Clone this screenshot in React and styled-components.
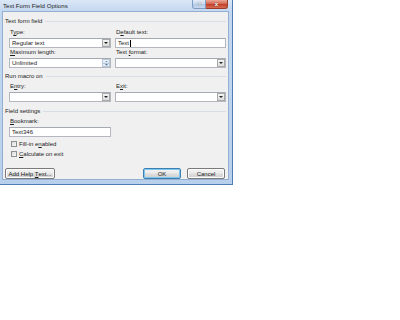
import React from 'react';
import styled, { createGlobalStyle } from 'styled-components';

const GlobalStyle = createGlobalStyle`
  html, body {
    margin: 0;
    padding: 0;
    background: #ffffff;
  }
  body {
    font-family: "Liberation Sans", Arial, sans-serif;
    color: #1b1b1b;
  }
`;

const Window = styled.div`
  width: 233px;
  height: 185px;
  box-sizing: border-box;
  display: flex;
  flex-direction: column;
  background: linear-gradient(#dbe7f6, #c4d8f0 11px, #b9d0ec);
  border-right: 1px solid #4f7db5;
  border-bottom: 1px solid #4f7db5;
`;

const TitleBar = styled.div`
  height: 11px;
  display: flex;
  align-items: flex-start;
  padding-left: 3px;
  padding-right: 4px;
`;

const Title = styled.div`
  flex: 1;
  font-size: 6.1px;
  line-height: 12px;
  color: #1e1e1e;
  white-space: nowrap;
`;

const CaptionButton = styled.div`
  width: ${({ $wide }) => ($wide ? '22px' : '14px')};
  height: 9px;
  box-sizing: border-box;
  display: flex;
  align-items: center;
  justify-content: center;
  font-size: 6px;
  font-weight: bold;
  color: #ffffff;
  text-shadow: 0 0 1px #3a3a3a;
  border: 1px solid ${({ $close }) => ($close ? '#9c3b2c' : '#7f9cc2')};
  border-top: none;
  border-left: ${({ $close }) => ($close ? 'none' : undefined)};
  border-radius: ${({ $close }) => ($close ? '0 0 3px 0' : '0 0 0 3px')};
  background: ${({ $close }) =>
    $close
      ? 'linear-gradient(#e9a797, #d56a55 45%, #c4402a 55%, #d36f55)'
      : 'linear-gradient(#e4edf8, #c9daef 45%, #b3c9e6 55%, #c7d9ef)'};
`;

const Client = styled.div`
  flex: 1;
  margin: 0 3px 4px 2px;
  border: 1px solid #93afd2;
  background: #f0f0f0;
  padding: 5px 2px 0 2px;
  display: flex;
  flex-direction: column;
`;

const GroupHeader = styled.div`
  height: 8px;
  flex: none;
  display: flex;
  align-items: center;
  gap: 3px;
  font-size: 6px;
  line-height: 8px;
  white-space: nowrap;
  margin-top: ${({ $top }) => $top || 0}px;

  &::after {
    content: '';
    flex: 1;
    height: 1px;
    background: #d9dee4;
  }
`;

const GroupBody = styled.div`
  padding-left: 4px;
  display: grid;
  grid-template-columns: 102px 111px;
  column-gap: 4px;
  row-gap: 0;
  margin-top: ${({ $top }) => $top}px;
`;

const Field = styled.div`
  display: flex;
  flex-direction: column;
  gap: 2px;
`;

const Label = styled.div`
  height: 8px;
  font-size: 6px;
  line-height: 8px;
  padding-left: 1px;
  white-space: nowrap;
  overflow: hidden;
`;

const Box = styled.div`
  height: 10px;
  box-sizing: border-box;
  display: flex;
  align-items: center;
  background: #ffffff;
  border: 1px solid #b4b7bf;
  border-top-color: #a5a9b1;
  padding-left: 2px;
  font-size: 6px;
  line-height: 8px;
  white-space: nowrap;
`;

const BoxText = styled.span`
  flex: 1;
  display: flex;
  align-items: center;
`;

const Caret = styled.span`
  width: 1px;
  height: 7px;
  background: #000000;
  margin-left: 0.5px;
`;

const DropButton = styled.div`
  width: 8px;
  height: 8px;
  box-sizing: border-box;
  border: 1px solid #a9a9a9;
  background: linear-gradient(#f4f4f4, #dcdcdc);
  display: flex;
  align-items: center;
  justify-content: center;
`;

const Spinner = styled.div`
  width: 8px;
  height: 8px;
  display: flex;
  flex-direction: column;
`;

const SpinPart = styled.div`
  flex: 1;
  box-sizing: border-box;
  border: 1px solid #b9c9dc;
  border-top: ${({ $down }) => ($down ? 'none' : undefined)};
  background: linear-gradient(#eef3f9, #d8e3ef);
  display: flex;
  align-items: center;
  justify-content: center;
`;

const Arrow = ({ up, size = 4, color = '#222' }) => (
  <svg width={size} height={size / 2} viewBox="0 0 4 2">
    <path d={up ? 'M0 2 L2 0 L4 2 Z' : 'M0 0 L4 0 L2 2 Z'} fill={color} />
  </svg>
);

const Checks = styled.div`
  padding-left: 6px;
  margin-top: 3px;
  display: flex;
  flex-direction: column;
  gap: 2px;
`;

const CheckRow = styled.div`
  height: 8px;
  display: flex;
  align-items: center;
  gap: 2px;
  font-size: 6px;
  line-height: 8px;
  white-space: nowrap;
`;

const CheckBox = styled.span`
  width: 6px;
  height: 6px;
  box-sizing: border-box;
  border: 1px solid #8e8f8f;
  background: linear-gradient(135deg, #dcdcdc, #f7f7f7);
`;

const ButtonRow = styled.div`
  margin-top: 10px;
  display: flex;
  gap: 6px;
  padding-right: 1px;
`;

const Button = styled.div`
  width: ${({ $w }) => $w}px;
  height: 11px;
  box-sizing: border-box;
  display: flex;
  align-items: center;
  justify-content: center;
  font-size: 6px;
  white-space: pre;
  border: 1px solid ${({ $default }) => ($default ? '#3c7fb1' : '#7a7a7a')};
  border-radius: 2px;
  background: linear-gradient(#f3f3f3, #ebebeb 45%, #dddddd 55%, #cfcfcf);
  box-shadow: ${({ $default }) => ($default ? 'inset 0 0 0 1px #7fc6ef' : 'inset 0 0 0 1px #fcfcfc')};
  margin-left: ${({ $push }) => ($push ? 'auto' : '0')};
`;

const Select = ({ value }) => (
  <Box>
    <BoxText>{value}</BoxText>
    <DropButton>
      <Arrow />
    </DropButton>
  </Box>
);

export default function App() {
  return (
    <>
      <GlobalStyle />
      <Window>
        <TitleBar>
          <Title>Text Form Field Options</Title>
          <CaptionButton>?</CaptionButton>
          <CaptionButton $wide $close>x</CaptionButton>
        </TitleBar>
        <Client>
          <GroupHeader>Text form field</GroupHeader>
          <GroupBody $top={3}>
            <Field>
              <Label>T<u>y</u>pe:</Label>
              <Select value="Regular text" />
            </Field>
            <Field>
              <Label>D<u>e</u>fault text:</Label>
              <Box>
                <BoxText>Text<Caret /></BoxText>
              </Box>
            </Field>
            <Field>
              <Label><u>M</u>aximum length:</Label>
              <Box>
                <BoxText>Unlimited</BoxText>
                <Spinner>
                  <SpinPart><Arrow up size={3} color="#4d6a8f" /></SpinPart>
                  <SpinPart $down><Arrow size={3} color="#4d6a8f" /></SpinPart>
                </Spinner>
              </Box>
            </Field>
            <Field>
              <Label>Text <u>f</u>ormat:</Label>
              <Select value="" />
            </Field>
          </GroupBody>

          <GroupHeader $top={4}>Run macro on</GroupHeader>
          <GroupBody $top={2}>
            <Field>
              <Label>E<u>n</u>try:</Label>
              <Select value="" />
            </Field>
            <Field>
              <Label>E<u>x</u>it:</Label>
              <Select value="" />
            </Field>
          </GroupBody>

          <GroupHeader $top={5}>Field settings</GroupHeader>
          <GroupBody $top={2}>
            <Field>
              <Label><u>B</u>ookmark:</Label>
              <Box>
                <BoxText>Text346</BoxText>
              </Box>
            </Field>
          </GroupBody>
          <Checks>
            <CheckRow>
              <CheckBox />
              <span>Fill-in e<u>n</u>abled</span>
            </CheckRow>
            <CheckRow>
              <CheckBox />
              <span><u>C</u>alculate on exit</span>
            </CheckRow>
          </Checks>

          <ButtonRow>
            <Button $w={50}>{'Add Help '}<u>T</u>ext...</Button>
            <Button $w={38} $default $push>OK</Button>
            <Button $w={38}>Cancel</Button>
          </ButtonRow>
        </Client>
      </Window>
    </>
  );
}
